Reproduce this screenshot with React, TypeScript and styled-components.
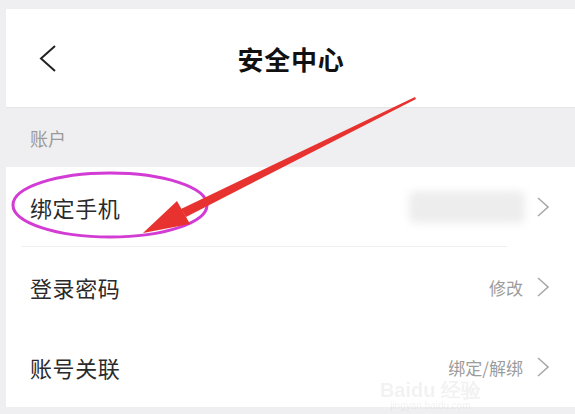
import React from "react";
import styled, { createGlobalStyle } from "styled-components";

const GlobalStyle = createGlobalStyle`
  html, body {
    margin: 0;
    padding: 0;
    background: #efeff1;
  }
  body {
    font-family: "Noto Sans CJK SC", "Noto Sans", sans-serif;
  }
`;

const Page = styled.div`
  position: relative;
  width: 575px;
  height: 414px;
  padding: 9px 0 0 6px;
  box-sizing: border-box;
  overflow: hidden;
`;

const Header = styled.div`
  height: 98px;
  background: #fff;
  display: flex;
  align-items: center;
  position: relative;
  box-shadow: 0 1px 1px rgba(0, 0, 0, 0.04);
`;

const BackButton = styled.div`
  width: 60px;
  padding-left: 33px;
  display: flex;
  align-items: center;
`;

const Title = styled.div`
  flex: 1;
  text-align: center;
  font-size: 26px;
  font-weight: 700;
  color: #111;
  margin-right: 92px;
  letter-spacing: 0.8px;
`;

const SectionLabel = styled.div`
  height: 60px;
  display: flex;
  align-items: center;
  padding-left: 24px;
  padding-top: 2px;
  box-sizing: border-box;
  font-size: 18px;
  color: #9a9a9a;
`;

const List = styled.div`
  background: #fff;
`;

const Row = styled.div<{ $divider?: boolean }>`
  height: 80px;
  display: flex;
  align-items: center;
  padding: 0 26px 0 24px;
  position: relative;
  ${(p) =>
    p.$divider &&
    `&::after {
      content: "";
      position: absolute;
      left: 16px;
      right: 68px;
      bottom: 0;
      height: 1px;
      background: #eeeeee;
    }`}
`;

const RowTitle = styled.div`
  flex: 1;
  font-size: 22px;
  color: #2a2a2a;
  letter-spacing: 0.6px;
`;

const RowValue = styled.div`
  font-size: 17px;
  color: #9c9c9c;
  margin-right: 14px;
`;

const Blurred = styled.div`
  width: 116px;
  height: 32px;
  background: #ededed;
  filter: blur(4px);
  margin-right: 12px;
  border-radius: 6px;
`;

const Overlay = styled.svg`
  position: absolute;
  left: 0;
  top: 0;
  pointer-events: none;
`;

const Watermark = styled.div`
  position: absolute;
  right: 94px;
  bottom: 2px;
  display: flex;
  flex-direction: column;
  align-items: center;
  opacity: 0.08;
  color: #666;
  font-family: "Liberation Sans", sans-serif;
`;

const WatermarkMain = styled.div`
  font-size: 20px;
  font-weight: 700;
  line-height: 20px;
`;

const WatermarkSub = styled.div`
  font-size: 10px;
  line-height: 12px;
`;

const Chevron = ({ color, w, h }: { color: string; w: number; h: number }) => (
  <svg width={w} height={h} viewBox={`0 0 ${w} ${h}`}>
    <polyline
      points={`1,1 ${w - 1},${h / 2} 1,${h - 1}`}
      fill="none"
      stroke={color}
      strokeWidth={1.6}
    />
  </svg>
);

const BackChevron = () => (
  <svg width="18" height="27" viewBox="0 0 18 27">
    <polyline points="16,1 2,13.5 16,26" fill="none" stroke="#222" strokeWidth="2" />
  </svg>
);

export default function App() {
  const tip = [143, 233];
  return (
    <Page>
      <GlobalStyle />
      <Header>
        <BackButton>
          <BackChevron />
        </BackButton>
        <Title>安全中心</Title>
      </Header>
      <SectionLabel>账户</SectionLabel>
      <List>
        <Row $divider>
          <RowTitle>绑定手机</RowTitle>
          <Blurred />
          <Chevron color="#aaa" w={12} h={20} />
        </Row>
        <Row>
          <RowTitle>登录密码</RowTitle>
          <RowValue>修改</RowValue>
          <Chevron color="#aaa" w={12} h={20} />
        </Row>
        <Row>
          <RowTitle>账号关联</RowTitle>
          <RowValue>绑定/解绑</RowValue>
          <Chevron color="#aaa" w={12} h={20} />
        </Row>
      </List>
      <Watermark>
        <WatermarkMain>Baidu 经验</WatermarkMain>
        <WatermarkSub>jingyan.baidu.com</WatermarkSub>
      </Watermark>
      <Overlay width="575" height="414" viewBox="0 0 575 414">
        <ellipse cx="110" cy="205" rx="97" ry="32" fill="none" stroke="#d23bd4" strokeWidth="3" />
        <polygon points="415,97 416,99 186,217 181,209" fill="#e8322f" />
        <polygon points={`${tip[0]},${tip[1]} 177,201 190,224`} fill="#e8322f" />
      </Overlay>
    </Page>
  );
}
